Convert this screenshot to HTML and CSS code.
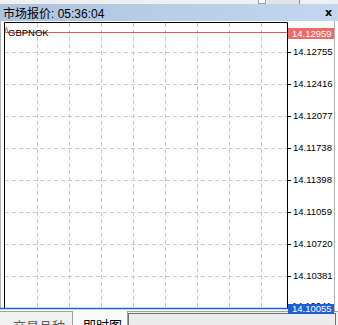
FILE: index.html
```html
<!DOCTYPE html>
<html lang="zh-CN">

<head>
    <meta charset="UTF-8">
    <meta name="viewport" content="width=device-width, initial-scale=1.0">
    <link rel="stylesheet" href="styles.css">
    <title>市场报价</title>
</head>

<body>
    <div class="window">
        <div class="strip">
            <span class="strip-box"></span>
            <span class="strip-thumb"></span>
        </div>
        <div class="titlebar">
            <span class="title">市场报价: 05:36:04</span>
            <span class="close">x</span>
        </div>
        <div class="main">
            <svg class="chart" width="288" height="290" viewBox="0 0 288 290">
                <line x1="0.5" y1="0" x2="0.5" y2="288" stroke="#b4b4b4" />
                <!-- grid -->
                <g stroke="#c8c8c8" stroke-dasharray="4 3">
                    <line x1="37.5" y1="2" x2="37.5" y2="287" />
                    <line x1="69.5" y1="2" x2="69.5" y2="287" />
                    <line x1="101.5" y1="2" x2="101.5" y2="287" />
                    <line x1="133.5" y1="2" x2="133.5" y2="287" />
                    <line x1="165.5" y1="2" x2="165.5" y2="287" />
                    <line x1="197.5" y1="2" x2="197.5" y2="287" />
                    <line x1="229.5" y1="2" x2="229.5" y2="287" />
                    <line x1="261.5" y1="2" x2="261.5" y2="287" />
                    <line x1="5" y1="31.5" x2="287" y2="31.5" />
                    <line x1="5" y1="63.5" x2="287" y2="63.5" />
                    <line x1="5" y1="95.5" x2="287" y2="95.5" />
                    <line x1="5" y1="127.5" x2="287" y2="127.5" />
                    <line x1="5" y1="159.5" x2="287" y2="159.5" />
                    <line x1="5" y1="191.5" x2="287" y2="191.5" />
                    <line x1="5" y1="223.5" x2="287" y2="223.5" />
                    <line x1="5" y1="255.5" x2="287" y2="255.5" />
                </g>
                <!-- frame -->
                <path d="M4.5 288V1.5H287.5V288" fill="none" stroke="#000" />
                <!-- price lines -->
                <line x1="5" y1="11.5" x2="287" y2="11.5" stroke="#e05a5a" />
                <polyline points="5,11 6.5,6 8,11.5" fill="none" stroke="#e05a5a" />
                <line x1="0" y1="287.5" x2="288" y2="287.5" stroke="#1f5fc8" stroke-width="1.5" />
                <text x="8" y="15" class="symbol">GBPNOK</text>
            </svg>
            <div class="axis">
                <div class="tick">14.12755</div>
                <div class="tick">14.12416</div>
                <div class="tick">14.12077</div>
                <div class="tick">14.11738</div>
                <div class="tick">14.11398</div>
                <div class="tick">14.11059</div>
                <div class="tick">14.10720</div>
                <div class="tick">14.10381</div>
                <div class="tag tag-ask">14.12959</div>
                <div class="tag tag-hidden">14.10041</div>
                <div class="tag tag-bid">14.10055</div>
            </div>
        </div>
        <div class="tabs">
            <div class="tab">交易品种</div>
            <div class="tab tab-on">即时图</div>
            <div class="scroll"></div>
        </div>
    </div>
</body>

</html>
```

FILE: styles.css
```css
* {
    margin: 0;
    padding: 0;
    box-sizing: border-box;
}

body {
    background: #f0f0f0;
    font-family: "Liberation Sans", "Noto Sans CJK SC", sans-serif;
}

.window {
    width: 338px;
    height: 325px;
    display: flex;
    flex-direction: column;
    overflow: hidden;
    background: #f0f0f0;
}

.strip {
    height: 5px;
    display: flex;
    padding-left: 258px;
}

.strip-box {
    width: 8px;
    height: 4px;
    border: 1px solid #a0a0a0;
    border-top: none;
    background: #fff;
}

.strip-thumb {
    width: 32px;
    height: 4px;
    margin-left: 2px;
    background: #e4e4e4;
    border-right: 1px solid #909090;
}

.titlebar {
    height: 17px;
    display: flex;
    align-items: center;
    justify-content: space-between;
    padding: 0 6px 0 3px;
    background: linear-gradient(to right, #adc3de, #c3d8ef);
}

.title {
    font-size: 12px;
    color: #000;
}

.close {
    font-family: "DejaVu Sans", sans-serif;
    font-size: 11px;
    font-weight: bold;
}

.main {
    height: 290px;
    display: flex;
    background: #fff;
}

.chart {
    display: block;
    flex: none;
}

.symbol {
    font-family: "Liberation Sans", sans-serif;
    font-size: 9.5px;
    fill: #000;
}

.axis {
    position: relative;
    width: 47px;
    padding-top: 15px;
    border-right: 1px solid #b4b4b4;
}

.tick {
    position: relative;
    height: 32px;
    line-height: 32px;
    padding-left: 5px;
    font-size: 9.5px;
    color: #000;
}

.tick::before {
    content: "";
    position: absolute;
    left: 0;
    top: 16px;
    width: 3px;
    height: 1px;
    background: #000;
}

.tag {
    position: absolute;
    left: 0;
    width: 46px;
    height: 11px;
    line-height: 11px;
    padding-left: 4px;
    font-size: 9.5px;
    color: #fff;
    white-space: nowrap;
}

.tag-ask {
    top: 7px;
    background: #f06a6a;
}

.tag-hidden {
    top: 279px;
    color: #000;
}

.tag-bid {
    top: 283px;
    height: 10px;
    line-height: 10px;
    background: #1f5fd8;
}

.tabs {
    flex: 1;
    display: flex;
    padding-left: 3px;
    border-top: 1px solid #a0a0a0;
}

.tab {
    width: 70px;
    padding: 4px 0 0 10px;
    font-size: 13px;
    color: #5a5a5a;
    border-right: 1px solid #a0a0a0;
}

.tab-on {
    width: 55px;
    color: #000;
    background: #fafafa;
    margin-top: -1px;
}

.scroll {
    width: 208px;
    margin-top: 1px;
    border: 1px solid #707070;
    background: #ececec;
}
```
